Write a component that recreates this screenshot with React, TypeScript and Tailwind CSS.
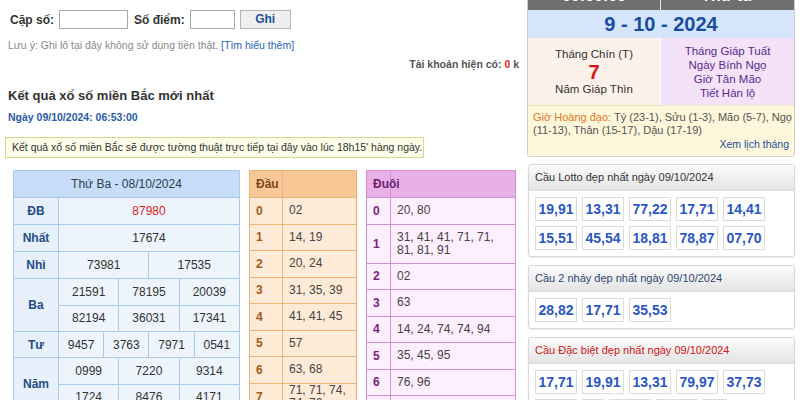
import React from "react";

const dau: [string, string][] = [
  ["0", "02"],
  ["1", "14, 19"],
  ["2", "20, 24"],
  ["3", "31, 35, 39"],
  ["4", "41, 41, 45"],
  ["5", "57"],
  ["6", "63, 68"],
  ["7", "71, 71, 74, 74, 76"],
  ["8", "80, 81, 81"],
  ["9", "91, 94, 95, 96"],
];

const duoi: [string, string][] = [
  ["0", "20, 80"],
  ["1", "31, 41, 41, 71, 71, 81, 81, 91"],
  ["2", "02"],
  ["3", "63"],
  ["4", "14, 24, 74, 74, 94"],
  ["5", "35, 45, 95"],
  ["6", "76, 96"],
  ["7", "57"],
  ["8", "68"],
  ["9", "19, 39"],
];

function NumBox({ v, w = "w-[42px]" }: { v: string; w?: string }) {
  return (
    <div
      className={`${w} h-[24px] border border-[#dcdcdc] bg-white flex items-center justify-center text-[14px] font-bold text-[#2b57c6]`}
    >
      {v}
    </div>
  );
}

function Card({
  title,
  titleColor,
  rows,
}: {
  title: string;
  titleColor: string;
  rows: { v: string; w?: string }[][];
}) {
  return (
    <div className="border border-[#d8d8d8] rounded-[3px] bg-white shadow-[0_1px_2px_rgba(0,0,0,0.08)] overflow-hidden">
      <div
        className={`h-[26px] flex items-center pl-[6px] text-[11px] bg-gradient-to-b from-[#fbfbfb] to-[#e4e4e4] border-b border-[#dadada] ${titleColor}`}
      >
        {title}
      </div>
      <div className="pl-[6px] pt-[6px] pb-[6px] flex flex-col gap-[5px]">
        {rows.map((r, i) => (
          <div key={i} className="flex gap-[5px]">
            {r.map((b, j) => (
              <NumBox key={j} v={b.v} w={b.w} />
            ))}
          </div>
        ))}
      </div>
    </div>
  );
}

export default function App() {
  const td = "border border-[#a9c9ef] bg-[#eef4fc] text-center text-[12px] text-[#333]";
  const lb = "border border-[#a9c9ef] bg-[#e8f0fb] text-center text-[12px] font-bold text-[#1f4d8a]";
  const r = (xs: string[]) => xs.map((x) => ({ v: x }));

  return (
    <div className="w-[800px] h-[400px] overflow-hidden bg-white flex font-['Liberation_Sans',Arial,sans-serif] text-[#333]">
      {/* Left column */}
      <div className="w-[526px] shrink-0">
        <div className="pt-[10px] pl-[10px] flex items-center h-[29px] text-[12px] font-bold text-[#333]">
          <span>Cặp số:</span>
          <input className="ml-[5px] w-[69px] h-[19px] border border-[#a9a9a9] bg-white" />
          <span className="ml-[6px]">Số điểm:</span>
          <input className="ml-[5px] w-[45px] h-[19px] border border-[#a9a9a9] bg-white" />
          <button className="ml-[5px] w-[51px] h-[19px] border border-[#b5b5b5] bg-[#efefef] text-[12px] font-bold text-[#1d4f9c] leading-[17px]">
            Ghi
          </button>
        </div>
        <div className="mt-[9px] pl-[8px] text-[10.5px] leading-[14px] text-[#8a8a8a]">
          Lưu ý: Ghi lô tại đây không sử dụng tiền thật.{" "}
          <span className="text-[#1d5fb8]">[Tìm hiểu thêm]</span>
        </div>
        <div className="mt-[5px] pr-[7px] text-right text-[10.5px] leading-[14px] font-bold text-[#555]">
          Tài khoản hiện có: <span className="text-[#e22]">0</span> k
        </div>
        <div className="mt-[16px] pl-[8px] text-[13px] leading-[18px] font-bold text-[#333]">
          Kết quả xổ số miền Bắc mới nhất
        </div>
        <div className="mt-[5px] pl-[8px] text-[10.5px] leading-[14px] font-bold text-[#2a5ca8]">
          Ngày 09/10/2024: 06:53:00
        </div>
        <div className="mt-[13px] ml-[5px] w-[419px] h-[21px] border border-[#c9df8f] bg-[#fdfee9] flex items-center pl-[6px] text-[10.5px] whitespace-nowrap text-[#333]">
          Kết quả xổ số miền Bắc sẽ được tường thuật trực tiếp tại đây vào lúc 18h15' hàng ngày.
        </div>

        <div className="mt-[12px] flex items-start">
          {/* Main result table */}
          <table className="ml-[13px] w-[227px] table-fixed border-collapse">
            <colgroup>
              <col className="w-[45px]" />
              {Array.from({ length: 12 }).map((_, i) => (
                <col key={i} />
              ))}
            </colgroup>
            <tbody>
              <tr className="h-[27px]">
                <td colSpan={13} className="border border-[#a9c9ef] bg-[#c6dcf8] text-center text-[12px] text-[#2c3e50]">
                  Thứ Ba - 08/10/2024
                </td>
              </tr>
              <tr className="h-[27px]">
                <td className={lb}>ĐB</td>
                <td colSpan={12} className={`${td} !text-[#e41b1b]`}>87980</td>
              </tr>
              <tr className="h-[27px]">
                <td className={lb}>Nhất</td>
                <td colSpan={12} className={td}>17674</td>
              </tr>
              <tr className="h-[27px]">
                <td className={lb}>Nhì</td>
                <td colSpan={6} className={td}>73981</td>
                <td colSpan={6} className={td}>17535</td>
              </tr>
              <tr className="h-[26.5px]">
                <td rowSpan={2} className={lb}>Ba</td>
                <td colSpan={4} className={td}>21591</td>
                <td colSpan={4} className={td}>78195</td>
                <td colSpan={4} className={td}>20039</td>
              </tr>
              <tr className="h-[26.5px]">
                <td colSpan={4} className={td}>82194</td>
                <td colSpan={4} className={td}>36031</td>
                <td colSpan={4} className={td}>17341</td>
              </tr>
              <tr className="h-[26px]">
                <td className={lb}>Tư</td>
                <td colSpan={3} className={td}>9457</td>
                <td colSpan={3} className={td}>3763</td>
                <td colSpan={3} className={td}>7971</td>
                <td colSpan={3} className={td}>0541</td>
              </tr>
              <tr className="h-[26.5px]">
                <td rowSpan={2} className={lb}>Năm</td>
                <td colSpan={4} className={td}>0999</td>
                <td colSpan={4} className={td}>7220</td>
                <td colSpan={4} className={td}>9314</td>
              </tr>
              <tr className="h-[26.5px]">
                <td colSpan={4} className={td}>1724</td>
                <td colSpan={4} className={td}>8476</td>
                <td colSpan={4} className={td}>4171</td>
              </tr>
            </tbody>
          </table>

          {/* Đầu */}
          <table className="ml-[9px] w-[108px] table-fixed border-collapse">
            <colgroup>
              <col className="w-[33px]" />
              <col />
            </colgroup>
            <tbody>
              <tr className="h-[27px] bg-[#f9c897]">
                <td className="border border-[#f0b374] pl-[6px] text-[12px] font-bold text-[#7a4a1e]">Đầu</td>
                <td className="border border-[#f0b374]" />
              </tr>
              {dau.map(([k, v]) => (
                <tr key={k} className="h-[26.5px] bg-[#fdebd8]">
                  <td className="border border-[#f0b374] pl-[6px] text-[12px] font-bold text-[#a5581c]">{k}</td>
                  <td className="border border-[#f0b374] px-[6px] text-[12px] leading-[13px] text-[#444]">{v}</td>
                </tr>
              ))}
            </tbody>
          </table>

          {/* Đuôi */}
          <table className="ml-[9px] w-[150px] table-fixed border-collapse">
            <colgroup>
              <col className="w-[24px]" />
              <col />
            </colgroup>
            <tbody>
              <tr className="h-[27px] bg-[#e7b1e8]">
                <td className="border border-[#d78ed8] pl-[6px] text-[12px] font-bold text-[#6d2070]">Đuôi</td>
                <td className="border border-[#d78ed8]" />
              </tr>
              {duoi.map(([k, v]) => (
                <tr key={k} className={`${k === "1" ? "h-[39px]" : "h-[26.5px]"} bg-[#fdeffd]`}>
                  <td className="border border-[#d78ed8] pl-[6px] text-[12px] font-bold text-[#7b1f80]">{k}</td>
                  <td className="border border-[#d78ed8] px-[6px] text-[12px] leading-[13px] text-[#444]">{v}</td>
                </tr>
              ))}
            </tbody>
          </table>
        </div>
      </div>

      {/* Right column */}
      <div className="w-[268px] shrink-0 ml-[1px]">
        <div className="border border-[#cfcfcf] rounded-b-[3px] overflow-hidden -mt-[21px]">
          <div className="h-[30px] grid grid-cols-2 bg-[#6f6f6f] text-white text-[16px] font-bold">
            <div className="flex items-end justify-center pb-[6px] leading-[16px] border-r border-[#e5e5e5]">00:00:00</div>
            <div className="flex items-end justify-center pb-[6px] leading-[16px]">Thứ tư</div>
          </div>
          <div className="h-[28px] bg-[#d5e5fb] flex items-center justify-center text-[20px] font-bold text-[#1a4d9f]">
            9 - 10 - 2024
          </div>
          <div className="h-[67px] grid grid-cols-2">
            <div className="bg-[#fcf2e9] flex flex-col items-center justify-center text-[11.5px] border-r border-white">
              <div className="leading-[15px] text-[#333]">Tháng Chín (T)</div>
              <div className="text-[20px] leading-[20px] font-bold text-[#e01010]">7</div>
              <div className="leading-[15px] text-[#333]">Năm Giáp Thìn</div>
            </div>
            <div className="bg-[#f3e2f8] flex flex-col items-center justify-center text-[11.5px] leading-[14px] text-[#5b2a91]">
              <div>Tháng Giáp Tuất</div>
              <div>Ngày Bính Ngọ</div>
              <div>Giờ Tân Mão</div>
              <div>Tiết Hàn lộ</div>
            </div>
          </div>
          <div className="h-[51px] bg-[#fef7dc] px-[5px] pt-[5px] text-[11px] leading-[13px] text-[#555] border-t border-[#f1e6c0]">
            <div className="whitespace-nowrap">
              <span className="text-[#e5781c]">Giờ Hoàng đạo:</span> Tý (23-1), Sửu (1-3), Mão (5-7), Ngọ
              <br />
              (11-13), Thân (15-17), Dậu (17-19)
            </div>
            <div className="mt-[1px] text-right text-[10.5px] text-[#1d4f9f]">Xem lịch tháng</div>
          </div>
        </div>

        <div className="mt-[7px] flex flex-col gap-[8px] pl-[1px]">
          <Card
            title="Cầu Lotto đẹp nhất ngày 09/10/2024"
            titleColor="text-[#333]"
            rows={[
              r(["19,91", "13,31", "77,22", "17,71", "14,41"]),
              r(["15,51", "45,54", "18,81", "78,87", "07,70"]),
            ]}
          />
          <Card
            title="Cầu 2 nháy đẹp nhất ngày 09/10/2024"
            titleColor="text-[#2f4670]"
            rows={[r(["28,82", "17,71", "35,53"])]}
          />
          <Card
            title="Cầu Đặc biệt đẹp nhất ngày 09/10/2024"
            titleColor="text-[#d01515]"
            rows={[
              r(["17,71", "19,91", "13,31", "79,97", "37,73"]),
              [
                { v: "69,96" },
                { v: "5", w: "w-[22px]" },
                { v: "36,63" },
                { v: "18,81" },
                { v: "55", w: "w-[24px]" },
              ],
            ]}
          />
        </div>
      </div>
    </div>
  );
}
